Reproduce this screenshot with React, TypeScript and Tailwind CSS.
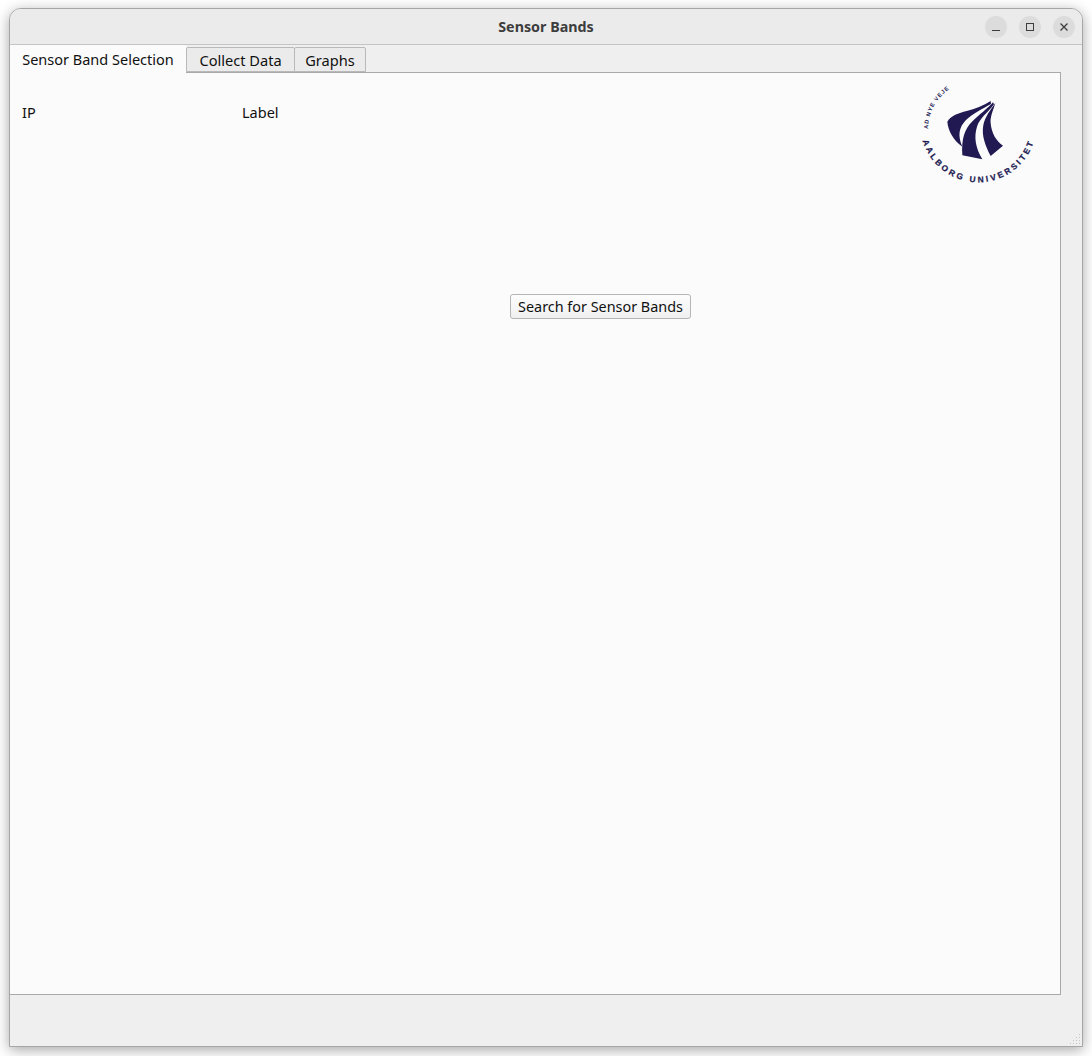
const font = "[font-family:'Noto_Sans','Open_Sans',sans-serif]"

function Logo() {
  return (
    <svg viewBox="0 0 450 360" className="w-[150px] h-[120px] shrink-0" fill="#211a52">
      <path d="M272 78C250 92 225 102 200 108C176 114 152 122 142 140C144 168 162 197 187 215C173 182 176 158 198 135C218 116 247 102 273 87Z" />
      <path d="M279 82C262 102 238 118 216 140C194 162 184 190 187 241L247 253C227 218 221 188 231 155C239 130 264 112 282 88Z" />
      <path d="M286 84C272 104 255 125 250 150C244 182 256 212 272 243L309 212C288 198 275 175 272 145C270 125 280 105 286 84Z" />
      <defs>
        <path id="arc-top" d="M84 162A145 145 0 0 1 152 40" />
        <path id="arc-bottom" d="M68 197A174 174 0 0 0 402 197" />
      </defs>
      <text fontFamily="'Liberation Sans', sans-serif" fontSize="17" fontWeight="700">
        <textPath href="#arc-top" textLength="140" lengthAdjust="spacing">AD NYE VEJE</textPath>
      </text>
      <text fontFamily="'Liberation Sans', sans-serif" fontSize="25" fontWeight="700" stroke="#211a52" strokeWidth="0.7">
        <textPath href="#arc-bottom" textLength="440" lengthAdjust="spacing">AALBORG UNIVERSITET</textPath>
      </text>
    </svg>
  )
}

function ResizeGrip() {
  const dots = [
    [9, 0],
    [6, 3], [9, 3],
    [3, 6], [6, 6], [9, 6],
    [0, 9], [3, 9], [6, 9], [9, 9],
  ]
  return (
    <svg width="10" height="10" className="absolute right-[2px] bottom-[2px]" fill="#c4c4c4">
      {dots.map(([x, y], i) => (
        <rect key={i} x={x} y={y} width="1" height="1" />
      ))}
    </svg>
  )
}

function WindowButton({ children }: { children: React.ReactNode }) {
  return (
    <div className="w-[22px] h-[22px] rounded-full bg-[#dcdcdc] flex items-center justify-center">
      <svg width="12" height="12" viewBox="0 0 12 12" fill="none" stroke="#3d3d3d" strokeWidth="1">
        {children}
      </svg>
    </div>
  )
}

export default function App() {
  const tabClass =
    "h-[25px] mt-[2px] -mb-px pt-[2px] flex items-center justify-center border border-[#b9b9b9] rounded-t-[2px] bg-[#ebebeb] text-[14.6px] text-[#111]"

  return (
    <div className={`w-[1092px] h-[1056px] bg-white pt-2 pl-[9px] ${font}`}>
      <div className="relative w-[1074px] h-[1039px] flex flex-col rounded-t-[12px] bg-[#efefef] border border-[#a6a6a6] shadow-[0_3px_14px_rgba(0,0,0,0.35)] overflow-hidden">
        <div className="h-9 shrink-0 relative flex items-center justify-center bg-[#ebebeb] border-b border-[#c4c4c4]">
          <span className="text-[14.3px] font-bold text-[#3d3d3d]">Sensor Bands</span>
          <div className="absolute right-[7px] top-[7px] flex gap-3">
            <WindowButton>
              <path d="M2 9.5H10" />
            </WindowButton>
            <WindowButton>
              <rect x="2.5" y="2.5" width="7" height="7" />
            </WindowButton>
            <WindowButton>
              <path d="M2.5 2.5L9.5 9.5M9.5 2.5L2.5 9.5" strokeWidth="1.3" />
            </WindowButton>
          </div>
        </div>

        <div className="flex h-[27px] shrink-0 relative z-10">
          <div className="w-[176px] h-[28px] pt-[2px] flex items-center justify-center bg-[#fbfbfb] text-[14.5px] text-[#111]">
            Sensor Band Selection
          </div>
          <div className={`w-[109px] ${tabClass}`}>Collect Data</div>
          <div className={`w-[72px] -ml-px ${tabClass}`}>Graphs</div>
        </div>

        <div className="w-[1051px] h-[923px] shrink-0 bg-[#fbfbfb] border-r border-b border-t border-[#a9a9a9] text-[14.5px] text-[#111]">
          <div className="flex items-start">
            <div className="w-[232px] pl-3 pt-[29px]">IP</div>
            <div className="pt-[29px]">Label</div>
            <div className="ml-auto mt-[2px] pr-[10px]">
              <Logo />
            </div>
          </div>
          <button className="block ml-[500px] mt-[99px] w-[181px] h-[25px] rounded-[3px] border border-[#b5b5b5] bg-gradient-to-b from-[#fdfdfd] to-[#f0f0f0] text-[14.4px] text-[#111]">
            Search for Sensor Bands
          </button>
        </div>

        <ResizeGrip />
      </div>
    </div>
  )
}
